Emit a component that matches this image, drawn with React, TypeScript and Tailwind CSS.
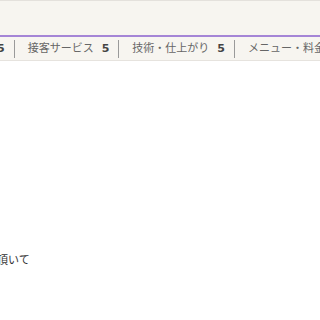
const tabs = [
  { name: "雰囲気", score: 5 },
  { name: "接客サービス", score: 5 },
  { name: "技術・仕上がり", score: 5 },
  { name: "メニュー・料金", score: 5 },
];

export default function App() {
  return (
    <div className="w-[320px] h-[320px] overflow-hidden bg-white text-[#333] font-['DejaVu_Sans','Noto_Sans_CJK_JP',sans-serif]">
      <div className="bg-[#f7f5f0] border-t border-[#e4e1dc]">
        <div className="h-[34px]" />
        <div className="h-[2px] bg-[#a585d6]" />
        <div className="h-[24px] border-b border-[#e6e3de] overflow-hidden">
          <div className="flex items-center h-full -ml-[57px] whitespace-nowrap">
            {tabs.map((t) => (
              <div key={t.name} className="flex items-center h-[18px] pl-[13px] pr-[9px] border-r border-[#9a9a9a] text-[11px] leading-none text-[#666] shrink-0">
                <span>{t.name}</span>
                <span className="ml-2 font-bold text-[#444]">{t.score}</span>
              </div>
            ))}
          </div>
        </div>
      </div>
      <div className="pt-[194px]">
        <p className="-ml-[3px] text-[11px] leading-none text-[#333]">頂いて</p>
      </div>
    </div>
  );
}
